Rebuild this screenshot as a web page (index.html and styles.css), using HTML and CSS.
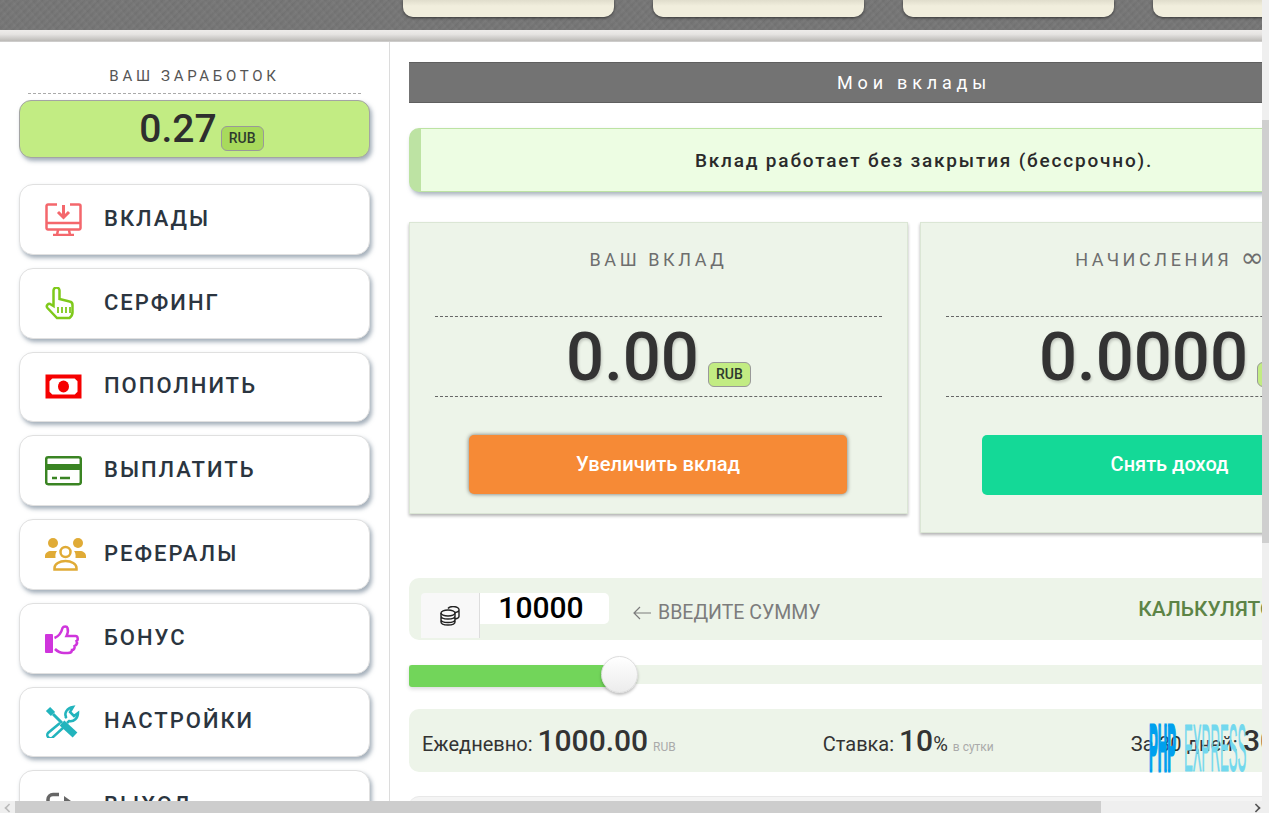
FILE: index.html
```html
<!DOCTYPE html>
<html lang="ru">
<head>
    <meta charset="UTF-8">
    <title>Мои вклады</title>
    <link rel="stylesheet" href="styles.css">
</head>
<body>
    <div class="window">
        <div class="page">
            <header class="top">
                <div class="tabs">
                    <div class="tab"></div>
                    <div class="tab"></div>
                    <div class="tab"></div>
                    <div class="tab"></div>
                </div>
            </header>
            <div class="band"></div>

            <div class="layout">
                <aside class="sidebar">
                    <div class="earn-title">ВАШ ЗАРАБОТОК</div>
                    <div class="earn-box">
                        <span class="earn-value">0.27</span>
                        <span class="badge badge-dark">RUB</span>
                    </div>

                    <nav class="menu">
                        <a class="menu-item">
                            <svg class="icon" viewBox="0 0 37 33" fill="none" stroke="#f4676c" stroke-width="2.500">
                                <path d="M12 1.500H3a1.500 1.500 0 0 0-1.500 1.500v22a1.500 1.500 0 0 0 1.500 1.500h31a1.500 1.500 0 0 0 1.500-1.500V3A1.500 1.500 0 0 0 34 1.500h-9"></path>
                                <path d="M1.500 20h34M13 27l-1 5M24 27l1 5M8 32h21"></path>
                                <path d="M18.500 2v12M13 9l5.500 5.500L24 9" stroke-width="3"></path>
                            </svg>
                            <span>ВКЛАДЫ</span>
                        </a>
                        <a class="menu-item">
                            <svg class="icon" viewBox="0 0 37 33" fill="none" stroke="#7fc91b" stroke-width="2.500">
                                <path d="M8.500 19V3.500a3 3 0 0 1 6 0V12l10 2.500a3.500 3.500 0 0 1 3 3.500v6a8 8 0 0 1-3 7H12L2.500 21c-2-2.500 1-5.500 3.500-3.500z"></path>
                                <path d="M13 20v6M17 20v6M21 20v6M25 20v6" stroke-width="1.800"></path>
                            </svg>
                            <span>СЕРФИНГ</span>
                        </a>
                        <a class="menu-item">
                            <svg class="icon" viewBox="0 0 37 33" fill="none">
                                <path d="M2.500 6.500h32v20h-32z" stroke="#f60000" stroke-width="4"></path>
                                <path d="M1 5h7a7 7 0 0 1-7 7zM36 5h-7a7 7 0 0 0 7 7zM1 28h7a7 7 0 0 0-7-7zM36 28h-7a7 7 0 0 1 7-7z" fill="#f60000"></path>
                                <ellipse cx="18.500" cy="16.500" rx="5.500" ry="6" fill="#f60000"></ellipse>
                            </svg>
                            <span>ПОПОЛНИТЬ</span>
                        </a>
                        <a class="menu-item">
                            <svg class="icon" viewBox="0 0 37 33" fill="none">
                                <rect x="1.200" y="3.200" width="34.600" height="27" rx="2" stroke="#3a8423" stroke-width="2.500"></rect>
                                <rect x="1" y="10" width="35" height="6" fill="#3a8423"></rect>
                                <path d="M7 24h5M15 24h10" stroke="#3a8423" stroke-width="2.500"></path>
                            </svg>
                            <span>ВЫПЛАТИТЬ</span>
                        </a>
                        <a class="menu-item">
                            <svg class="icon icon-wide" viewBox="0 0 41 33" fill="#e0ab36">
                                <circle cx="8" cy="5" r="5"></circle>
                                <circle cx="33" cy="5" r="5"></circle>
                                <path d="M0 20v-2c0-3 3-5 6-5h6c-1 1-2 3-1.500 7zM41 20v-2c0-3-3-5-6-5h-6c1 1 2 3 1.500 7z"></path>
                                <g fill="none" stroke="#e0ab36" stroke-width="2.500">
                                    <circle cx="20.500" cy="14" r="5"></circle>
                                    <path d="M9.500 31.500V30c0-4 5-7 11-7s11 3 11 7v1.500z"></path>
                                </g>
                            </svg>
                            <span>РЕФЕРАЛЫ</span>
                        </a>
                        <a class="menu-item">
                            <svg class="icon" viewBox="0 0 37 33" fill="none" stroke="#cf35dc" stroke-width="2.500">
                                <rect x="0" y="12" width="8" height="19" rx="1" fill="#cf35dc" stroke="none"></rect>
                                <path d="M10 27c3 3 6 4 9 4h4c2 0 4-1 4-3 2 0 3-2 2.500-4 2-1 3-3 2-5 2-1 1.500-5-1-5h-9c1-2 2-5 1-8-.5-2-4-2-5 0-1 4-3 8-8 10"></path>
                            </svg>
                            <span>БОНУС</span>
                        </a>
                        <a class="menu-item">
                            <svg class="icon" viewBox="0 0 37 33" fill="none" stroke="#22b4bd">
                                <path d="M3 4l5 5" stroke-width="6"></path>
                                <path d="M8 9l9 9" stroke-width="3"></path>
                                <path d="M17 18l13 12" stroke-width="7"></path>
                                <path d="M15 18L3 28a3 3 0 0 0 5 4l11-10" stroke-width="2.500"></path>
                                <path d="M20 13l1-1c-2-4 1-9 7-10l-3 5 4 4 4-3c0 5-4 9-9 8l-2 2" stroke-width="2.500"></path>
                            </svg>
                            <span>НАСТРОЙКИ</span>
                        </a>
                        <a class="menu-item">
                            <svg class="icon" viewBox="0 0 37 33" fill="none" stroke="#666" stroke-width="3.500">
                                <path d="M14 5.500H8a5 5 0 0 0-5 5v14"></path>
                                <path d="M19 7l14 10-14 10z" fill="#666" stroke="none"></path>
                            </svg>
                            <span>ВЫХОД</span>
                        </a>
                    </nav>
                </aside>

                <main class="content">
                    <h2 class="page-title">Мои вклады</h2>
                    <div class="alert">Вклад работает без закрытия (бессрочно).</div>

                    <div class="cards">
                        <section class="card">
                            <div class="card-title">ВАШ ВКЛАД</div>
                            <div class="card-sum">
                                <span class="sum">0.00</span>
                                <span class="badge badge-light">RUB</span>
                            </div>
                            <a class="btn btn-orange">Увеличить вклад</a>
                        </section>
                        <section class="card card-tall">
                            <div class="card-title">НАЧИСЛЕНИЯ <span class="infinity">∞</span></div>
                            <div class="card-sum">
                                <span class="sum">0.0000</span>
                                <span class="badge badge-light">RUB</span>
                            </div>
                            <a class="btn btn-green">Снять доход</a>
                        </section>
                    </div>

                    <div class="calc-bar">
                        <div class="calc-input">
                            <div class="calc-addon">
                                <svg viewBox="0 0 20 20" width="20" height="20" fill="none" stroke="#222" stroke-width="1.400">
                                    <ellipse cx="8" cy="7" rx="7" ry="3"></ellipse>
                                    <path d="M1 7v9c0 2 3 3 7 3s7-1 7-3V7M1 10c0 2 3 3 7 3s7-1 7-3M1 13.500c0 2 3 3 7 3s7-1 7-3"></path>
                                    <path d="M8 2.500c1-1.500 3-2 5-2 3 0 6 1.500 6 3v7c0 1-1 2-4 2.500M15 6.500c2-.3 4-1 4-2.500"></path>
                                </svg>
                            </div>
                            <div class="calc-value">10000</div>
                        </div>
                        <div class="calc-hint">
                            <svg viewBox="0 0 18 14" width="18" height="14" fill="none" stroke="#7c7c7c" stroke-width="1.200">
                                <path d="M18 7H1M7 1L1 7l6 6"></path>
                            </svg>
                            ВВЕДИТЕ СУММУ
                        </div>
                        <div class="calc-label">КАЛЬКУЛЯТОР</div>
                    </div>

                    <div class="slider">
                        <div class="slider-fill"></div>
                        <div class="slider-thumb"></div>
                    </div>

                    <div class="stats">
                        <div class="stat">Ежедневно: <b>1000.00</b> <small>RUB</small></div>
                        <div class="stat stat-rate">Ставка: <b>10</b><i>%</i> <small>в сутки</small></div>
                        <div class="stat stat-term">За 30 дней: <b>30000</b></div>
                    </div>

                    <div class="next-block"></div>
                </main>
            </div>

            <div class="logo"><span class="logo-php">PHP</span><span class="logo-express">EXPRESS</span></div>
        </div>

        <div class="vscroll"><div class="vscroll-thumb"></div></div>
        <div class="hscroll">
            <span class="arrow arrow-left"></span>
            <div class="hscroll-thumb"></div>
            <span class="arrow arrow-right"></span>
        </div>
    </div>
</body>
</html>
```

FILE: styles.css
```css
html, body {
    margin: 0;
    height: 100%;
    overflow: hidden;
}

body {
    font-family: Roboto, "Liberation Sans", sans-serif;
    background: #fff;
    color: #333;
}

.window {
    display: grid;
    grid-template-columns: 1262px 7px;
    grid-template-rows: 801px 12px;
    width: 1269px;
    height: 813px;
}

.page {
    position: relative;
    overflow: hidden;
    min-width: 0;
}

/* top strip */
.top {
    height: 30px;
    background-color: #767676;
    background-image:
        repeating-linear-gradient(135deg, rgba(0, 0, 0, 0.03) 0, rgba(255, 255, 255, 0.03) 3px, rgba(0, 0, 0, 0.02) 5px),
        repeating-linear-gradient(50deg, rgba(255, 255, 255, 0.025) 0, rgba(0, 0, 0, 0.025) 2px, rgba(255, 255, 255, 0.01) 7px);
}

.tabs {
    display: flex;
    gap: 39px;
    padding-left: 403px;
}

.tab {
    flex: 0 0 211px;
    height: 17px;
    background: linear-gradient(#e0ddcc, #f1eedd 35%);
    border-radius: 0 0 10px 10px;
    box-shadow: 0 1px 3px rgba(0, 0, 0, 0.55);
}

.band {
    height: 12px;
    background: linear-gradient(#eeecea, #e6e4e2 35%, #bdbbb8 90%, #d8d8d8);
}

.layout {
    display: flex;
}

/* left column */
.sidebar {
    flex: 0 0 390px;
    height: 770px;
    box-sizing: border-box;
    padding: 26px 19px 0;
    border-right: 1px solid #dcdcdc;
}

.earn-title {
    margin: 0 9px 6px;
    padding-bottom: 9px;
    border-bottom: 1px dashed #aaa;
    text-align: center;
    font-size: 15px;
    line-height: 16px;
    letter-spacing: 3.7px;
    color: #555;
}

.earn-box {
    display: flex;
    justify-content: center;
    align-items: flex-end;
    gap: 4px;
    height: 58px;
    box-sizing: border-box;
    padding: 0 0 6px 14px;
    background: #c2ec83;
    border: 1px solid #a4a4a4;
    border-radius: 12px;
    box-shadow: 2px 3px 4px rgba(90, 110, 130, 0.55);
}

.earn-value {
    font-size: 39px;
    line-height: 44px;
    font-weight: 500;
    color: #2e2e2e;
}

.badge {
    display: inline-block;
    flex: none;
    box-sizing: border-box;
    width: 43px;
    height: 25px;
    border: 1px solid #999;
    border-radius: 6px;
    text-align: center;
    font-size: 14px;
    font-weight: 500;
    line-height: 23px;
    color: #2e3a2e;
}

.badge-dark {
    background: #a8da5c;
}

.badge-light {
    background: #c2ec83;
}

.menu {
    display: flex;
    flex-direction: column;
    gap: 13px;
    margin-top: 26px;
}

.menu-item {
    display: flex;
    align-items: center;
    flex: none;
    height: 70.75px;
    box-sizing: border-box;
    padding-left: 25px;
    background: #fff;
    border: 1px solid #e0e0e0;
    border-radius: 14px;
    box-shadow: 2px 3px 4px rgba(90, 110, 130, 0.55);
    font-size: 22px;
    font-weight: 500;
    letter-spacing: 2px;
    color: #2b3540;
}

.menu-item span {
    margin-top: -2px;
}

.icon {
    flex: none;
    width: 37px;
    height: 33px;
    margin-right: 22px;
}

.icon-wide {
    width: 41px;
    margin-right: 18px;
}

/* main column */
.content {
    flex: none;
    width: 1010px;
    padding: 20px 0 0 19px;
}

.page-title {
    margin: 0 0 25px;
    height: 41px;
    background: #737373;
    border-top: 1px solid #5f5f5f;
    border-bottom: 1px solid #5f5f5f;
    box-sizing: border-box;
    text-align: center;
    font-size: 18px;
    font-weight: 400;
    line-height: 39px;
    letter-spacing: 4.8px;
    color: #fff;
}

.alert {
    height: 64px;
    box-sizing: border-box;
    padding-left: 9px;
    background: #edfde3;
    border: 1px solid #bde3a3;
    border-left: 12px solid #bde3a3;
    border-radius: 10px 0 0 10px;
    box-shadow: 2px 3px 4px rgba(90, 110, 130, 0.5);
    text-align: center;
    font-size: 19px;
    font-weight: 500;
    line-height: 63px;
    letter-spacing: 1.8px;
    color: #2a2a2a;
}

.cards {
    display: flex;
    align-items: flex-start;
    gap: 12px;
    margin-top: 30px;
}

.card {
    flex: none;
    width: 499px;
    height: 292px;
    box-sizing: border-box;
    padding: 26px 25px 0;
    background: #edf4e9;
    border: 1px solid #dbe6d5;
    box-shadow: 0 2px 3px rgba(0, 0, 0, 0.3);
    text-align: center;
}

.card-tall {
    height: 311px;
}

.card-title {
    height: 67px;
    font-size: 18px;
    line-height: 22px;
    letter-spacing: 3.6px;
    color: #6e6e6e;
}

.infinity {
    font-family: "DejaVu Sans", sans-serif;
    font-size: 28px;
    line-height: 0;
    letter-spacing: 0;
    vertical-align: -1px;
}

.card-sum {
    display: flex;
    justify-content: center;
    align-items: flex-end;
    gap: 9px;
    height: 81px;
    border-top: 1px dashed #666;
    border-bottom: 1px dashed #666;
    padding-bottom: 9px;
    box-sizing: border-box;
}

.sum {
    margin-bottom: -4px;
    font-size: 67px;
    line-height: 68px;
    font-weight: 500;
    color: #333;
    text-shadow: 1px 2px 3px rgba(0, 0, 0, 0.2);
}

.btn {
    display: block;
    width: 376px;
    height: 60px;
    margin: 38px auto 0;
    border-radius: 5px;
    font-size: 20px;
    font-weight: 500;
    line-height: 58px;
    color: #fff;
}

.btn-orange {
    width: 378px;
    height: 59px;
    margin-left: 34px;
    background: #f68a36;
    box-shadow: 0 0 4px rgba(0, 0, 0, 0.55);
    font-size: 20.200px;
}

.btn-green {
    background: #14d997;
}

/* calculator */
.calc-bar {
    display: flex;
    align-items: flex-start;
    height: 62px;
    margin-top: 45px;
    padding: 15px 0 0 12px;
    box-sizing: border-box;
    background: #edf4e9;
    border-radius: 10px 0 0 10px;
}

.calc-input {
    display: flex;
    flex: none;
}

.calc-addon {
    display: flex;
    align-items: center;
    justify-content: center;
    width: 59px;
    height: 45px;
    box-sizing: border-box;
    background: #f8f8f8;
    border-right: 1px solid #ddd;
    border-radius: 4px 0 0 0;
}

.calc-value {
    width: 129px;
    height: 31px;
    background: #fff;
    border-radius: 0 5px 5px 0;
    padding-right: 7px;
    box-sizing: border-box;
    text-align: center;
    font-size: 30px;
    font-weight: 500;
    line-height: 30px;
    color: #000;
}

.calc-hint {
    display: flex;
    align-items: center;
    gap: 7px;
    margin: 10px 0 0 24px;
    font-size: 19.500px;
    line-height: 20px;
    color: #7c7c7c;
}

.calc-label {
    margin: 5px 0 0 auto;
    font-size: 21px;
    font-weight: 500;
    line-height: 22px;
    color: #5d8446;
    padding-right: 131px;
}

.slider {
    position: relative;
    height: 19px;
    margin-top: 25px;
    background: #edf4e9;
}

.slider-fill {
    width: 200px;
    height: 22px;
    background: #72d55a;
    border-radius: 3px;
    box-shadow: 0 2px 4px rgba(0, 0, 0, 0.15);
}

.slider-thumb {
    position: absolute;
    left: 192px;
    top: -9px;
    width: 37px;
    height: 37px;
    box-sizing: border-box;
    border: 1px solid #ddd;
    border-radius: 50%;
    background: linear-gradient(#fff, #ececec);
    box-shadow: 0 2px 3px rgba(0, 0, 0, 0.25);
}

.stats {
    display: flex;
    align-items: baseline;
    height: 63px;
    margin-top: 25px;
    padding: 14px 0 0 13px;
    box-sizing: border-box;
    background: #edf4e9;
    border-radius: 10px 0 0 10px;
    font-size: 20px;
    color: #333;
}

.stat {
    flex: none;
    white-space: nowrap;
}

.stat b {
    font-size: 30px;
    font-weight: 500;
}

.stat i {
    font-style: normal;
    font-size: 20px;
}

.stat small {
    font-size: 12px;
    color: #aaa;
}

.stat-rate {
    margin-left: 147px;
}

.stat-term {
    margin-left: 137px;
    word-spacing: 0.5px;
}

.next-block {
    height: 40px;
    margin-top: 24px;
    background: #f4f4f4;
    border-top: 1px solid #e8e8e8;
    border-radius: 10px 0 0 0;
}

/* watermark */
.logo {
    position: absolute;
    left: 1149px;
    top: 724px;
    display: flex;
    width: 100px;
    height: 49px;
    font-family: "Liberation Sans", sans-serif;
    font-weight: 700;
    font-size: 66px;
    line-height: 49px;
}

.logo-php,
.logo-express {
    display: block;
    flex: none;
    white-space: nowrap;
    transform-origin: 0 0;
}

.logo-php {
    width: 35px;
    color: #00a0ee;
    -webkit-text-stroke: 3px #00a0ee;
    transform: scaleX(0.2);
}

.logo-express {
    width: 65px;
    color: #72d8ee;
    -webkit-text-stroke: 1px #72d8ee;
    font-weight: 400;
    transform: scaleX(0.2);
}

/* window scrollbars */
.vscroll {
    background: #efefef;
    padding-top: 120px;
}

.vscroll-thumb {
    height: 423px;
    background: #cfcfcf;
}

.hscroll {
    grid-column: 1 / 3;
    display: flex;
    align-items: stretch;
    background: #efefef;
    position: relative;
}

.hscroll-thumb {
    width: 1086px;
    margin-left: 15px;
    background: #cdcdcd;
}

.arrow {
    position: absolute;
    top: 3px;
    width: 6px;
    height: 6px;
    border-left: 2px solid #bbb;
    border-bottom: 2px solid #bbb;
}

.arrow-left {
    left: 5px;
    transform: rotate(45deg) scale(0.8);
}

.arrow-right {
    right: 9px;
    border-color: #555;
    transform: rotate(225deg) scale(0.8);
}
```
